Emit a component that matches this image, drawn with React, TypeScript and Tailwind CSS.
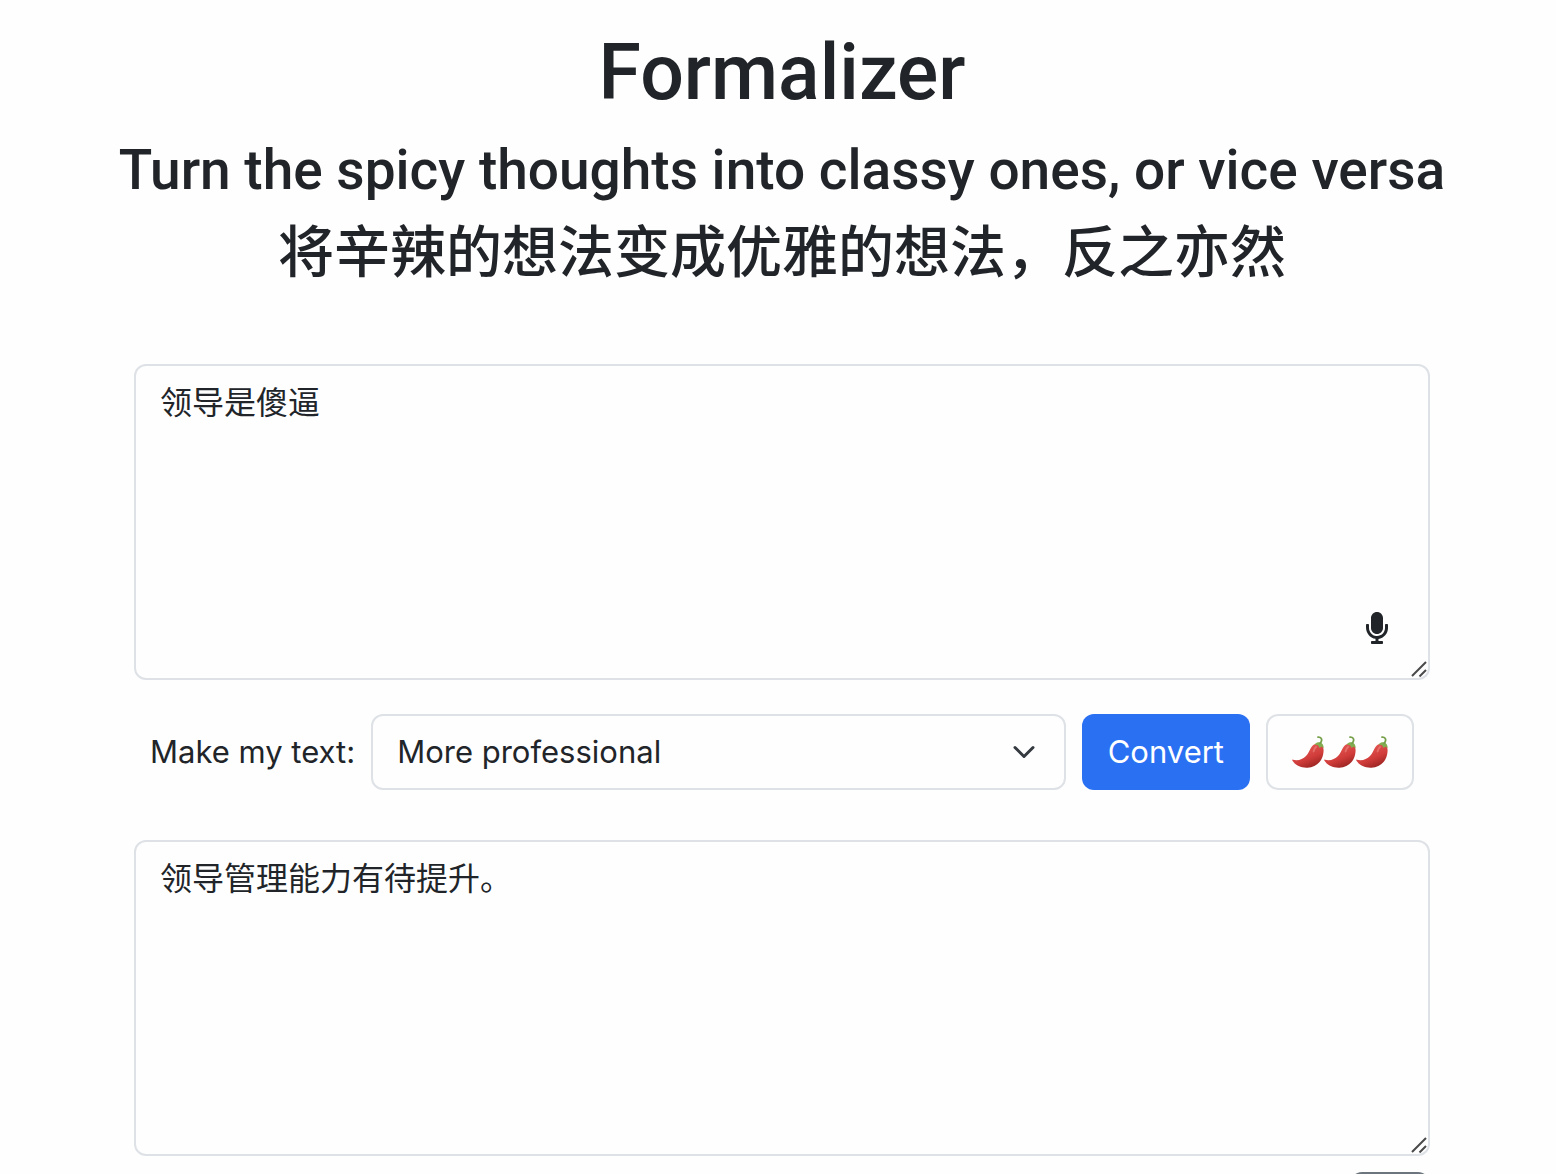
import { useState } from "react";
import { FaCopy, FaMicrophone } from "react-icons/fa";

const HEAT_LEVEL = 3;

function Pepper() {
  return (
    <svg viewBox="0 0 32 32" className="size-8" aria-hidden="true">
      <defs>
        <linearGradient id="pepper-skin" x1="0.4" y1="0.2" x2="0.8" y2="0.95">
          <stop offset="0" stopColor="#e0534e" />
          <stop offset="0.5" stopColor="#d03c3a" />
          <stop offset="1" stopColor="#96221f" />
        </linearGradient>
      </defs>
      <path
        d="M0.3 23.4C5 25.2 10.5 23.8 14 20C18.5 15 18.2 8.2 25.6 7.4C29.2 7.4 31.6 10 31.6 14.2C31.4 24.4 25 31.2 15.4 31.7C8.2 32 3 28.8 0.3 24.6Z"
        fill="url(#pepper-skin)"
      />
      <path
        d="M21.6 15.4C22 13.4 22.8 12 24 11"
        fill="none"
        stroke="#f0928c"
        strokeWidth="2"
        strokeLinecap="round"
        opacity="0.5"
      />
      <path
        d="M22.6 8.4C24.2 6.4 26.6 6 28.2 6.4C30.6 7 31.8 9 31.6 12.2L29.6 10.6L27.6 12L26 9.2Z"
        fill="#83ad52"
      />
      <path
        d="M28.2 7.4C30.6 4.4 30 0.8 26 1.2"
        fill="none"
        stroke="#76a04a"
        strokeWidth="1.8"
        strokeLinecap="round"
      />
    </svg>
  );
}

/** Diagonal grip in the bottom-right corner of a text area. */
function ResizeGrip() {
  return (
    <svg
      viewBox="0 0 16 16"
      className="pointer-events-none absolute right-[3px] bottom-[3px] size-4"
      fill="none"
      stroke="#4a4a4a"
      strokeWidth="2"
      aria-hidden="true"
    >
      <path d="M1 15L15 1M8.5 15.5L15 9" />
    </svg>
  );
}

function TextPanel({
  label,
  value,
  onChange,
  children,
}: {
  label: string;
  value: string;
  onChange: (value: string) => void;
  children?: React.ReactNode;
}) {
  return (
    <div className="relative text-[32px]">
      <textarea
        aria-label={label}
        value={value}
        rows={5}
        onChange={(e) => onChange(e.target.value)}
        className="block h-[316px] w-full resize-none rounded-xl border-2 border-[#dee2e6] bg-transparent px-6 py-3 leading-[50px] outline-none"
      />
      {children}
      <ResizeGrip />
    </div>
  );
}

export default function App() {
  const [input, setInput] = useState("领导是傻逼");
  const [output, setOutput] = useState("领导管理能力有待提升。");
  const [mode, setMode] = useState("professional");

  return (
    <div className="min-h-screen bg-[#fefefe] font-['Inter','Noto_Sans_CJK_SC',sans-serif] text-[31px] text-[#212529]">
      <main className="pt-[25px] pr-[126px] pl-[134px]">
        <header className="-mx-4 mb-[77px] text-center font-['Roboto','Noto_Sans_CJK_SC',sans-serif] font-medium">
          <h1 className="mb-4 text-[77px] leading-24">Formalizer</h1>
          <h2 className="mb-4 text-[55px] leading-[67px]">
            Turn the spicy thoughts into classy ones, or vice versa
          </h2>
          <h2 className="text-[56px] leading-[67px]">
            将辛辣的想法变成优雅的想法，反之亦然
          </h2>
        </header>

        <TextPanel label="Your text" value={input} onChange={setInput}>
          <button
            type="button"
            aria-label="Dictate"
            className="absolute right-[42px] bottom-9"
          >
            <FaMicrophone className="h-8 w-[22px]" />
          </button>
        </TextPanel>

        <div className="mt-[34px] mb-[50px] flex h-[76px] items-stretch gap-4 px-4">
          <label htmlFor="mode" className="self-center whitespace-nowrap">
            Make my text:
          </label>
          <div className="relative flex-1">
            <select
              id="mode"
              value={mode}
              onChange={(e) => setMode(e.target.value)}
              className="size-full appearance-none rounded-xl border-2 border-[#dee2e6] bg-transparent px-6 outline-none"
            >
              <option value="professional">More professional</option>
              <option value="polite">More polite</option>
              <option value="formal">More formal</option>
              <option value="informal">More informal</option>
            </select>
            <svg
              viewBox="0 0 16 16"
              className="pointer-events-none absolute top-[26px] right-[30px] size-6"
              fill="none"
              stroke="#343a40"
              strokeWidth="2"
              strokeLinecap="round"
              strokeLinejoin="round"
              aria-hidden="true"
            >
              <path d="m2 5 6 6 6-6" />
            </svg>
          </div>
          <button
            type="button"
            className="rounded-xl bg-[#2a70f3] px-[26px] text-white"
          >
            Convert
          </button>
          <button
            type="button"
            aria-label="Spiciness level"
            className="flex items-center rounded-xl border-2 border-[#dee2e6] px-6"
          >
            {Array.from({ length: HEAT_LEVEL }, (_, i) => (
              <Pepper key={i} />
            ))}
          </button>
        </div>

        <TextPanel label="Result" value={output} onChange={setOutput} />

        <div className="mt-4 flex justify-end">
          <button
            type="button"
            aria-label="Copy result"
            className="rounded-xl bg-[#6c757d] px-6 py-4 text-white"
          >
            <FaCopy className="size-8" />
          </button>
        </div>
      </main>
    </div>
  );
}
